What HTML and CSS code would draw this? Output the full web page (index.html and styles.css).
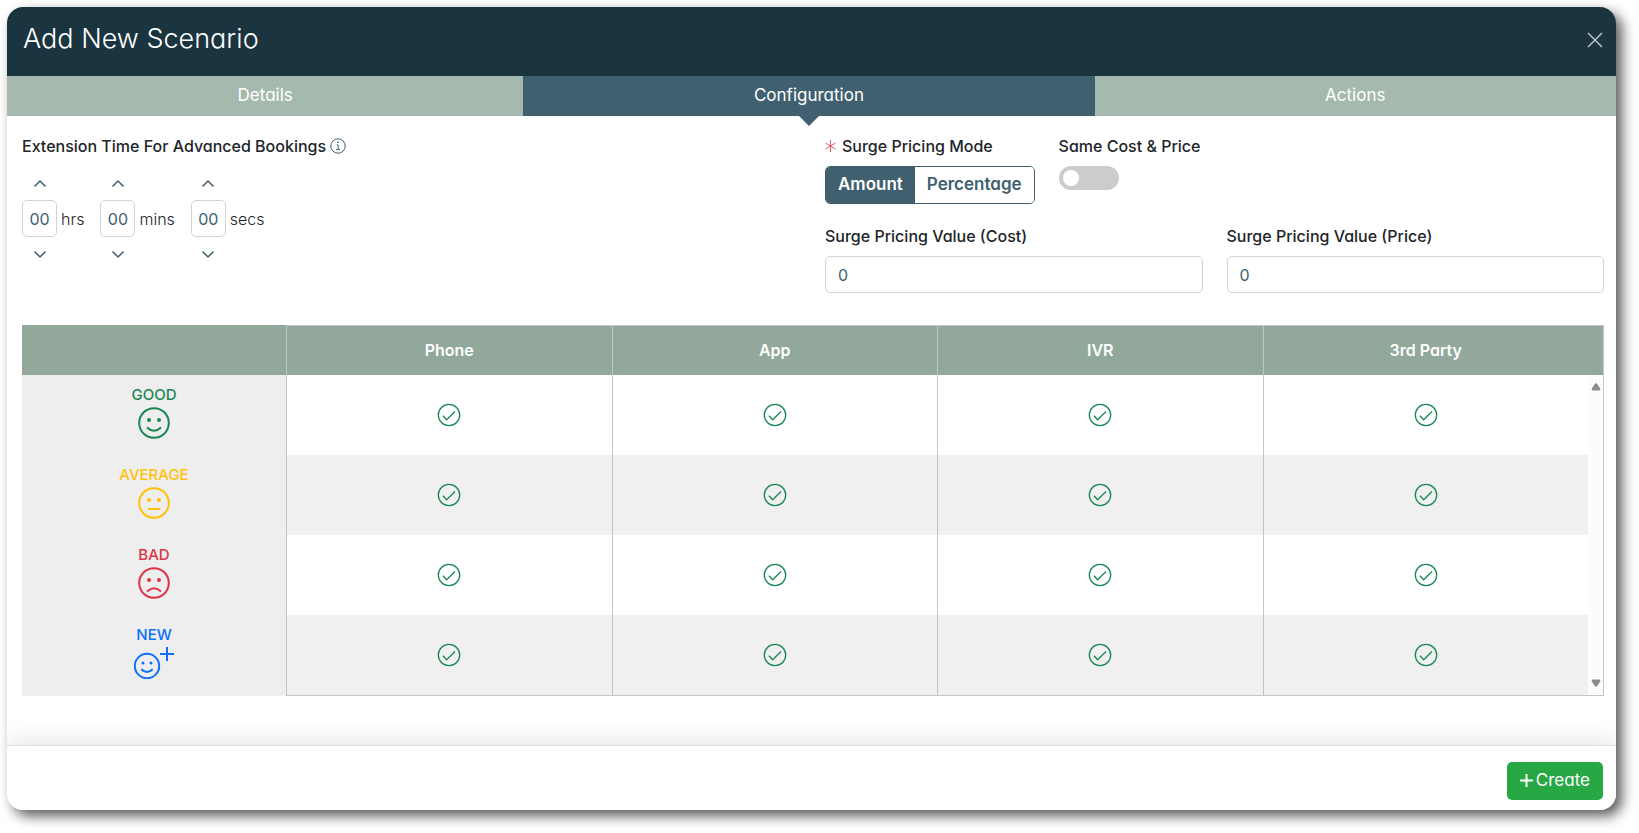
FILE: index.html
```html
<!DOCTYPE html>
<html lang="en">
<head>
<meta charset="utf-8">
<title>Add New Scenario</title>
<link rel="stylesheet" href="styles.css">
</head>
<body>
<svg width="0" height="0" class="sprite" aria-hidden="true">
  <symbol id="up" viewBox="0 0 14 9"><path d="M1.500 7.500L7 2l5.500 5.500"/></symbol>
  <symbol id="down" viewBox="0 0 14 9"><path d="M1.500 1.500L7 7l5.500-5.500"/></symbol>
  <symbol id="check" viewBox="0 0 24 24"><circle cx="12" cy="12" r="10.7"/><path d="M6 12.8l3.6 3.9 8.4-8.2"/></symbol>
</svg>
<main class="modal">
  <header class="modal-header">
    <h1 class="modal-title">Add New Scenario</h1>
    <button class="close" type="button" aria-label="Close"><svg width="16" height="16" viewBox="0 0 16 16"><path d="M1 1l14 14M15 1L1 15"/></svg></button>
  </header>
  <nav class="tabs">
    <a class="tab" href="#details">Details</a>
    <a class="tab tab-active" href="#configuration" aria-current="page">Configuration</a>
    <a class="tab" href="#actions">Actions</a>
  </nav>
  <div class="modal-body">
    <section class="columns">
      <div>
        <div class="label">Extension Time For Advanced Bookings <svg class="info" width="16" height="16" viewBox="0 0 16 16"><circle cx="8" cy="8" r="7.2"/><path d="M6.5 7H8.2v4.6M6.2 11.6h4"/><path class="dot" d="M7.3 3.6h1.5v1.5H7.3z"/></svg></div>
        <div class="time">
          <div class="unit">
            <button class="step" type="button" aria-label="More hours"><svg width="14" height="9"><use href="#up"/></svg></button>
            <input class="time-input" id="hrs" value="00"><label class="unit-name" for="hrs">hrs</label>
            <button class="step" type="button" aria-label="Fewer hours"><svg width="14" height="9"><use href="#down"/></svg></button>
          </div>
          <div class="unit">
            <button class="step" type="button" aria-label="More minutes"><svg width="14" height="9"><use href="#up"/></svg></button>
            <input class="time-input" id="mins" value="00"><label class="unit-name" for="mins">mins</label>
            <button class="step" type="button" aria-label="Fewer minutes"><svg width="14" height="9"><use href="#down"/></svg></button>
          </div>
          <div class="unit">
            <button class="step" type="button" aria-label="More seconds"><svg width="14" height="9"><use href="#up"/></svg></button>
            <input class="time-input" id="secs" value="00"><label class="unit-name" for="secs">secs</label>
            <button class="step" type="button" aria-label="Fewer seconds"><svg width="14" height="9"><use href="#down"/></svg></button>
          </div>
        </div>
      </div>
      <div class="pricing">
        <div class="mode-row">
          <div>
            <div class="label" id="mode-label"><svg class="required" width="11" height="12" viewBox="0 0 11 12"><path d="M5.5 0v12M.5 3l10 6M10.500 3l-10 6"/></svg>Surge Pricing Mode</div>
            <div class="segmented" role="group" aria-labelledby="mode-label">
              <button class="segment segment-on" type="button">Amount</button>
              <button class="segment" type="button">Percentage</button>
            </div>
          </div>
          <div>
            <label class="label" for="same">Same Cost &amp; Price</label>
            <input class="switch" id="same" type="checkbox" role="switch">
          </div>
        </div>
        <div class="columns">
          <div>
            <label class="label" for="cost">Surge Pricing Value (Cost)</label>
            <input class="field" id="cost" value="0">
          </div>
          <div>
            <label class="label" for="price">Surge Pricing Value (Price)</label>
            <input class="field" id="price" value="0">
          </div>
        </div>
      </div>
    </section>
    <table class="ratings">
      <colgroup><col class="col-name"><col><col><col><col><col class="col-scroll"></colgroup>
      <thead>
        <tr><td class="corner"></td><th scope="col">Phone</th><th scope="col">App</th><th scope="col">IVR</th><th scope="col">3rd Party</th><td class="head-end"></td></tr>
      </thead>
      <tbody>
        <tr>
          <th class="rating good" scope="row">GOOD<svg class="face" width="32" height="32" viewBox="0 0 32 32"><circle cx="16" cy="16" r="14.800"/><path d="M9 20.500q7 6.500 14 0"/><g class="dot"><circle cx="11" cy="13" r="2"/><circle cx="21" cy="13" r="2"/></g></svg></th>
          <td><svg class="check" width="24" height="24"><use href="#check"/></svg></td><td><svg class="check" width="24" height="24"><use href="#check"/></svg></td><td><svg class="check" width="24" height="24"><use href="#check"/></svg></td><td><svg class="check" width="24" height="24"><use href="#check"/></svg></td>
          <td class="scroll" rowspan="4"><div class="scroll-track"><svg width="10" height="8" viewBox="0 0 10 8"><path d="M3.600 1.200Q5-.5 6.400 1.200L9.200 5.500Q9.800 7.500 8 7.500H2Q.2 7.500.8 5.500z"/></svg><svg width="10" height="8" viewBox="0 0 10 8"><path d="M3.600 6.800Q5 8.500 6.400 6.800L9.200 2.500Q9.800.5 8 .5H2Q.2.5.8 2.500z"/></svg></div></td>
        </tr>
        <tr>
          <th class="rating average" scope="row">AVERAGE<svg class="face" width="32" height="32" viewBox="0 0 32 32"><circle cx="16" cy="16" r="14.800"/><path d="M10 22h12.500"/><g class="dot"><circle cx="11" cy="13" r="2"/><circle cx="21" cy="13" r="2"/></g></svg></th>
          <td><svg class="check" width="24" height="24"><use href="#check"/></svg></td><td><svg class="check" width="24" height="24"><use href="#check"/></svg></td><td><svg class="check" width="24" height="24"><use href="#check"/></svg></td><td><svg class="check" width="24" height="24"><use href="#check"/></svg></td>
        </tr>
        <tr>
          <th class="rating bad" scope="row">BAD<svg class="face" width="32" height="32" viewBox="0 0 32 32"><circle cx="16" cy="16" r="14.800"/><path d="M9 24.500q7-6.500 14 0"/><g class="dot"><circle cx="11" cy="13" r="2"/><circle cx="21" cy="13" r="2"/></g></svg></th>
          <td><svg class="check" width="24" height="24"><use href="#check"/></svg></td><td><svg class="check" width="24" height="24"><use href="#check"/></svg></td><td><svg class="check" width="24" height="24"><use href="#check"/></svg></td><td><svg class="check" width="24" height="24"><use href="#check"/></svg></td>
        </tr>
        <tr>
          <th class="rating new" scope="row">NEW<svg class="face" width="40" height="32" viewBox="0 0 40 32"><circle cx="13" cy="19" r="12.200"/><path d="M7.300 22.300q5.700 5.500 11.400 0M33 0v14M26 7h14"/><g class="dot"><circle cx="9" cy="16" r="1.500"/><circle cx="17" cy="16" r="1.500"/></g></svg></th>
          <td><svg class="check" width="24" height="24"><use href="#check"/></svg></td><td><svg class="check" width="24" height="24"><use href="#check"/></svg></td><td><svg class="check" width="24" height="24"><use href="#check"/></svg></td><td><svg class="check" width="24" height="24"><use href="#check"/></svg></td>
        </tr>
      </tbody>
    </table>
  </div>
  <footer class="modal-footer">
    <button class="create" type="button"><svg width="13" height="13" viewBox="0 0 13 13"><path d="M6.500 0v13M0 6.500h13"/></svg>Create</button>
  </footer>
</main>
</body>
</html>
```
FILE: styles.css
```css
* { box-sizing: border-box; }
body {
  margin: 0;
  padding: 7px 0 23px;
  background: #fff;
  color: #212529;
  font: 16px/24px Inter, "Liberation Sans", sans-serif;
  font-feature-settings: "cv11";
}
button, input { font: inherit; font-feature-settings: inherit; color: inherit; margin: 0; }
svg { fill: none; stroke: currentColor; stroke-width: 1.5; flex: none; }
.dot { fill: currentColor; stroke: none; }
.sprite { position: absolute; }

.modal {
  display: flex;
  flex-direction: column;
  min-height: calc(100vh - 30px);
  margin: 0 23px 0 7px;
  border-radius: 16px;
  overflow: hidden;
  background: #fff;
  box-shadow: 6px 6px 13px rgba(0, 0, 0, .65);
}
.modal-header {
  display: flex;
  align-items: flex-start;
  justify-content: space-between;
  padding: 16px 13px 21px 16px;
  background: #1a3440;
  color: #fff;
}
.modal-title { margin: 0; font-size: 27px; line-height: 32px; font-weight: 300; }
.close {
  display: flex;
  padding: 9px 0 0;
  border: 0;
  background: none;
  color: #bac2c6;
}
.tabs { display: flex; }
.tab {
  flex: 1 1 auto;
  padding: 7px 0 9px;
  background: #a6b9ae;
  color: #fff;
  font-size: 17px;
  text-align: center;
  text-decoration: none;
}
.tab-active { position: relative; background: #40606f; }
.tab-active::after {
  content: "";
  position: absolute;
  top: 100%;
  left: 50%;
  margin-left: -10px;
  border: 10px solid transparent;
  border-top-color: #40606f;
  border-bottom: 0;
}

.modal-body { flex: 1; padding: 18px 12px 16px 15px; }
.columns { display: grid; grid-template-columns: 1fr 1fr; gap: 24px; }
.label {
  display: flex;
  align-items: center;
  gap: 4px;
  margin-bottom: 8px;
  font-weight: 500;
}
.info { color: #40606f; stroke-width: 1; }
.required { margin-right: 2px; color: #e35d6a; stroke-width: 1; }
.time { display: flex; gap: 16px; }
.unit { display: grid; grid-template-columns: 35px auto; column-gap: 4px; align-items: center; }
.step {
  grid-column: 1;
  display: flex;
  align-items: center;
  justify-content: center;
  height: 34px;
  padding: 0;
  border: 0;
  background: none;
  color: #40606f;
}
.time-input, .field {
  height: 37px;
  border: 1px solid #ced4da;
  border-radius: 5px;
  background: #fff;
  color: #40606f;
}
.time-input { grid-column: 1; width: 35px; padding: 0; text-align: center; }
.unit-name { grid-column: 2; font-weight: 300; }

.pricing { display: grid; gap: 20px; }
.mode-row { display: flex; gap: 24px; }
.segmented {
  display: flex;
  border: 1px solid #40606f;
  border-radius: 5px;
  overflow: hidden;
}
.segment {
  padding: 5px 12px 7px;
  border: 0;
  background: #fff;
  color: #40606f;
  font-size: 17px;
  font-weight: 600;
}
.segment-on { background: #40606f; color: #fff; }
.switch {
  display: block;
  width: 60px;
  height: 24px;
  padding: 4px;
  border-radius: 12px;
  background: #ccc;
  appearance: none;
}
.switch::before {
  content: "";
  display: block;
  width: 16px;
  height: 16px;
  border-radius: 50%;
  background: #fff;
}
.field { width: 100%; padding: 0 12px; }

.ratings {
  width: 100%;
  margin-top: 32px;
  table-layout: fixed;
  border-collapse: separate;
  border-spacing: 0;
  text-align: center;
}
.col-name { width: 264px; }
.col-scroll { width: 16px; }
.ratings td, .ratings th { padding: 0 0 1px; }
.ratings thead { background: #91a89b; color: #fff; }
.ratings thead th { height: 50px; padding-bottom: 2px; font-weight: 600; border-top: 1px solid #c4c4c4; border-left: 1px solid #c4c4c4; }
.ratings .head-end { border-top: 1px solid #c4c4c4; border-right: 1px solid #c4c4c4; }
.ratings tbody td { border-left: 1px solid #c4c4c4; }
.ratings tbody tr:nth-child(even) td { background: #f0f0f0; }
.ratings tbody tr:last-child td { border-bottom: 1px solid #c4c4c4; }
.ratings .rating { height: 80px; padding-top: 8px; vertical-align: top; background: #eee; font-size: 15px; font-weight: 500; }
.ratings tr:last-child .rating { height: 81px; }
.face { display: block; margin: 0 auto; stroke-width: 2; }
.good, .check { color: #198754; }
.average { color: #ffc107; }
.bad { color: #dc3545; }
.new { color: #0d6efd; }
.check { display: block; margin: 0 auto; stroke-width: 1.3; }
.ratings tbody .scroll {
  padding: 0;
  border-left: 0;
  border-right: 1px solid #c4c4c4;
  border-bottom: 1px solid #c4c4c4;
  background: #fcfcfc;
}
.scroll-track {
  display: flex;
  flex-direction: column;
  justify-content: space-between;
  align-items: center;
  height: 320px;
  padding: 8px 0;
}
.scroll-track svg { fill: #8b8b8b; stroke: none; }

.modal-footer {
  display: flex;
  justify-content: flex-end;
  padding: 16px 13px 10px;
  border-top: 1px solid #dee2e6;
  background: #fff;
  box-shadow: 0 0 30px rgba(0, 0, 0, .14);
}
.create {
  display: flex;
  align-items: center;
  gap: 3px;
  padding: 6px 13px 8px;
  border: 0;
  border-radius: 5px;
  background: #28a745;
  color: #fff;
  font-size: 17px;
}
.create svg { stroke-width: 2; }
```
